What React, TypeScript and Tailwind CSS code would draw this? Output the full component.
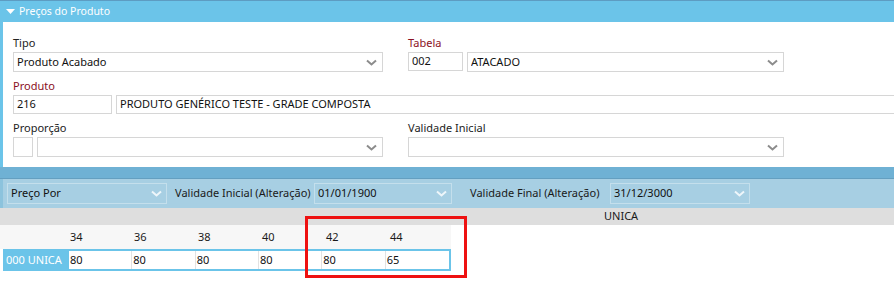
import React from "react";

const Chevron = ({ light = false }: { light?: boolean }) => (
  <svg width="11" height="7" viewBox="0 0 11 7" className="shrink-0">
    <path
      d="M1 1.5 L5.5 5.5 L10 1.5"
      fill="none"
      stroke={light ? "#eef6fa" : "#8c8c8c"}
      strokeWidth="2"
    />
  </svg>
);

function Label({ text, red = false }: { text: string; red?: boolean }) {
  return (
    <div
      className={`h-[18px] leading-[18px] ${red ? "text-[#8b1024]" : "text-[#222]"}`}
    >
      {text}
    </div>
  );
}

function Box({
  w,
  h = "h-[20px]",
  value,
  select = false,
}: {
  w: string;
  h?: string;
  value?: string;
  select?: boolean;
}) {
  return (
    <div
      className={`${w} ${h} flex shrink-0 items-center justify-between border border-[#d6d6d6] bg-white pl-[3px] pr-[5px] text-[#111]`}
    >
      <span className="truncate">{value}</span>
      {select && <Chevron />}
    </div>
  );
}

function BarSelect({ w, value }: { w: string; value: string }) {
  return (
    <div
      className={`${w} flex h-[21px] shrink-0 items-center justify-between border border-[#c4dfec] pl-[3px] pr-[4px] text-[#111]`}
    >
      <span>{value}</span>
      <Chevron light />
    </div>
  );
}

const sizes = ["34", "36", "38", "40", "42", "44"];
const prices = ["80", "80", "80", "80", "80", "65"];

export default function App() {
  return (
    <div className="relative h-[282px] w-[894px] overflow-hidden bg-white font-['Noto_Sans',sans-serif] text-[11px]">
      {/* title bar */}
      <div className="flex h-[22px] items-center gap-[4px] border-t border-[#5d9cc2] bg-[#6bc4e9] pl-[6px] text-[10.5px] text-white">
        <svg width="9" height="6" viewBox="0 0 9 6">
          <path d="M0 0 H9 L4.5 5 Z" fill="#ffffff" />
        </svg>
        <span>Preços do Produto</span>
      </div>

      {/* form panel */}
      <div className="bg-[#6bc4e9] pl-[3px]">
        <div className="h-[145px] bg-white pl-[10px] pt-[12px]">
          <div className="flex gap-[25px]">
            <div>
              <Label text="Tipo" />
              <Box w="w-[370px]" value="Produto Acabado" select />
            </div>
            <div>
              <Label text="Tabela" red />
              <div className="flex gap-[4px]">
                <Box w="w-[55px]" h="h-[19px]" value="002" />
                <Box w="w-[317px]" value="ATACADO" select />
              </div>
            </div>
          </div>

          <div className="mt-[5px]">
            <Label text="Produto" red />
            <div className="flex gap-[4px]">
              <Box w="w-[99px]" h="h-[19px]" value="216" />
              <div className="flex h-[19px] w-[820px] shrink-0 items-center border border-[#d6d6d6] pl-[3px] text-[#111]">
                PRODUTO GENÉRICO TESTE - GRADE COMPOSTA
              </div>
            </div>
          </div>

          <div className="mt-[5px] flex gap-[25px]">
            <div>
              <Label text="Proporção" />
              <div className="flex gap-[4px]">
                <Box w="w-[20px]" h="h-[20px]" />
                <Box w="w-[346px]" select />
              </div>
            </div>
            <div>
              <Label text="Validade Inicial" />
              <Box w="w-[376px]" select />
            </div>
          </div>
        </div>
      </div>

      {/* separator strip */}
      <div className="h-[12px] border-b border-[#649fc0] bg-[#6fb1d4]" />

      {/* toolbar */}
      <div className="flex h-[29px] items-center border-l-[3px] border-[#8cc3dd] bg-[#a7cfe3] pl-[4px] text-[#1a1a1a]">
        <BarSelect w="w-[160px]" value="Preço Por" />
        <span className="ml-[8px] w-[139px] shrink-0 whitespace-nowrap">
          Validade Inicial (Alteração)
        </span>
        <BarSelect w="w-[138px]" value="01/01/1900" />
        <span className="ml-[18px] w-[140px] shrink-0 whitespace-nowrap">
          Validade Final (Alteração)
        </span>
        <BarSelect w="w-[140px]" value="31/12/3000" />
      </div>

      {/* group header */}
      <div className="flex h-[17px] items-center bg-[#dedede] pl-[604px] text-[#1a1a1a]">
        UNICA
      </div>

      {/* grid */}
      <div className="flex h-[24px] w-[451px] items-center bg-[#f7f7f7] pl-[67px] text-[#1a1a1a]">
        {sizes.map((s) => (
          <div key={s} className="w-[64px] pl-[3px]">
            {s}
          </div>
        ))}
      </div>
      <div className="flex h-[22px] pl-[3px]">
        <div className="flex w-[64px] items-center whitespace-nowrap bg-[#6bc4e9] pl-[3px] text-white">
          000 UNICA
        </div>
        <div className="flex w-[384px] border-2 border-[#6bc4e9]">
          {prices.map((p, i) => (
            <div
              key={i}
              className="flex w-[64px] items-center border-r border-[#e2e2e2] pl-[1px] text-[#111] last:border-r-0"
            >
              {p}
            </div>
          ))}
        </div>
      </div>

      {/* highlight */}
      <div className="absolute left-[305px] top-[216px] h-[62px] w-[162px] border-[3px] border-[#ee1111]" />
    </div>
  );
}
